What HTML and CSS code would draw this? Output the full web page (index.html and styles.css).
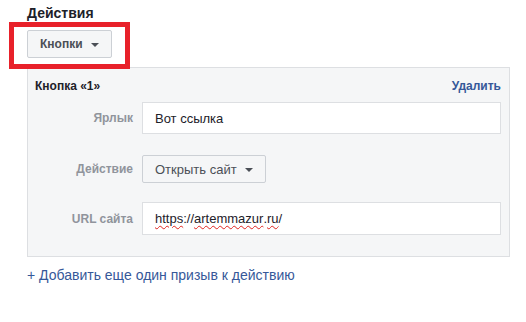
FILE: index.html
```html
<!DOCTYPE html>
<html lang="ru">
<head>
<meta charset="utf-8">
<link rel="stylesheet" href="styles.css">
</head>
<body>
<div class="page">
  <h2 class="title">Действия</h2>
  <div class="picker">
    <button class="dd dd-bold">Кнопки <span class="caret"></span></button>
  </div>
  <div class="panel">
    <div class="panel-head">
      <span class="panel-title">Кнопка «1»</span>
      <a class="del">Удалить</a>
    </div>
    <div class="row row-1">
      <span class="label">Ярлык</span>
      <div class="input">Вот ссылка</div>
    </div>
    <div class="row row-2">
      <span class="label">Действие</span>
      <button class="dd">Открыть сайт <span class="caret"></span></button>
    </div>
    <div class="row row-3">
      <span class="label">URL сайта</span>
      <div class="input url"><span class="sp">https</span>://<span class="sp">artemmazur</span>.<span class="sp">ru</span>/</div>
    </div>
  </div>
  <a class="add">+ Добавить еще один призыв к действию</a>
  <div class="highlight"></div>
</div>
</body>
</html>
```
FILE: styles.css
```css
* { box-sizing: border-box; }
html, body { margin: 0; padding: 0; background: #fff; }
body {
  font-family: "Liberation Sans", Arial, sans-serif;
  color: #1d2129;
  width: 526px;
  height: 322px;
  overflow: hidden;
}
.page {
  position: relative;
  padding: 4px 16px 0 27px;
}
.title {
  margin: 0;
  font-size: 14px;
  font-weight: bold;
  line-height: 18px;
  color: #1d2129;
}
.picker {
  margin-top: 8px;
  height: 28px;
}
.dd {
  display: inline-flex;
  align-items: center;
  height: 28px;
  padding: 0 12px;
  background: #f5f6f7;
  border: 1px solid #ccd0d5;
  border-radius: 2px;
  font-family: inherit;
  font-size: 13px;
  color: #4b4f56;
  gap: 8px;
}
.dd-bold {
  font-weight: bold;
  font-size: 12px;
}
.caret {
  width: 0;
  height: 0;
  border-left: 4px solid transparent;
  border-right: 4px solid transparent;
  border-top: 4px solid #4b4f56;
  margin-top: 1px;
}
.panel {
  margin-top: 9px;
  width: 483px;
  height: 190px;
  background: #f5f6f7;
  border: 1px solid #dddfe2;
  padding: 0 8px 0 7px;
}
.panel-head {
  display: flex;
  justify-content: space-between;
  align-items: center;
  height: 34px;
  padding-top: 2px;
}
.panel-title {
  font-size: 12px;
  font-weight: bold;
  color: #1d2129;
}
.del {
  font-size: 12px;
  font-weight: bold;
  color: #365899;
}
.row {
  display: flex;
  align-items: center;
  gap: 9px;
}
.label {
  width: 98px;
  text-align: right;
  font-size: 12px;
  font-weight: bold;
  color: #90949c;
}
.input {
  flex: 1;
  height: 32px;
  background: #fff;
  border: 1px solid #dddfe2;
  padding: 0 12px;
  display: flex;
  align-items: center;
  font-size: 13px;
  color: #1d2129;
}
.row-1 { margin-top: 0; }
.row-2 { margin-top: 21px; }
.row-2 .dd { height: 28px; }
.row-3 { margin-top: 19px; }
.row-3 .input { height: 33px; }
.sp {
  text-decoration: underline wavy #e0241f;
  text-decoration-thickness: 1px;
  text-underline-offset: 2px;
}
.add {
  display: block;
  margin-top: 10px;
  font-size: 14px;
  color: #365899;
}
.highlight {
  position: absolute;
  left: 9px;
  top: 22px;
  width: 121px;
  height: 47px;
  border: 5px solid #e8212a;
}
```
